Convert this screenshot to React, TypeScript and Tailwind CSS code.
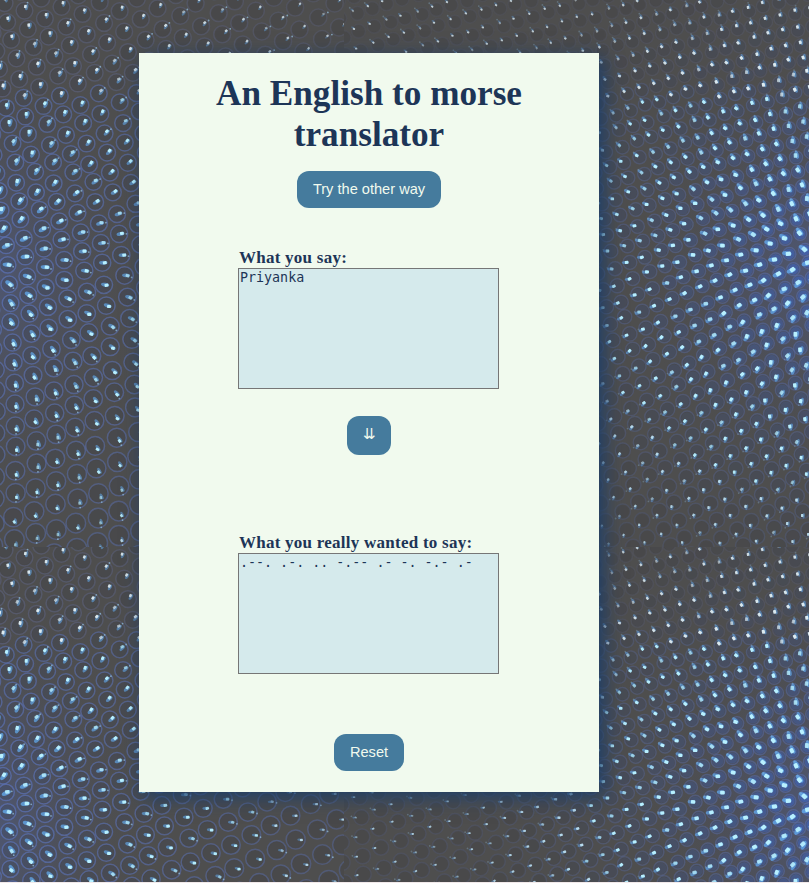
import React from "react";

type Drop = { x: number; y: number; r: number; angle: number; glow: number; jitter: number };

const TILE_H = 547;
const SEAM_X = 344;

function noise(i: number, j: number) {
  const s = Math.sin(i * 127.1 + j * 311.7) * 43758.5453;
  return s - Math.floor(s);
}

function field(
  sx: number,
  sy: number,
  a: [number, number],
  b: [number, number],
  kUp: number,
  kDown: number,
  minX: number,
  maxX: number,
  reach: number,
  radius: number,
  bend: number,
): Drop[] {
  const drops: Drop[] = [];
  for (let i = -50; i <= 50; i++) {
    for (let j = -50; j <= 50; j++) {
      const lx = i * a[0] + j * b[0];
      const ly = i * a[1] + j * b[1];
      const d = Math.hypot(lx, ly);
      const turn = (ly / 260) * bend;
      const ux = lx * Math.cos(turn) - ly * Math.sin(turn) * 0.4;
      const uy = lx * Math.sin(turn) + ly * Math.cos(turn * 0.4);
      const t = 1 / (1 + Math.exp(-uy / 60));
      const k = kUp * (1 - t) + kDown * t;
      const n = noise(i, j);
      const x = sx + ux * (1 + k * d) + (n - 0.5) * 2.4;
      const y = sy + uy * (1 + k * d) + (noise(j, i) - 0.5) * 2.4;
      if (x < minX - 10 || x > maxX + 10 || y < -10 || y > TILE_H + 10) continue;
      const dist = Math.hypot(x - sx, y - sy);
      drops.push({
        x,
        y,
        r: radius * (1 + 1.6 * k * d),
        angle: Math.atan2(y - sy, x - sx),
        glow: Math.max(0, 1 - dist / reach),
        jitter: n,
      });
    }
  }
  return drops;
}

const leftDrops = field(-30, 262, [17.5, -7.5], [1.5, 17.8], 0.0001, 0.0006, 0, SEAM_X, 420, 8, 0.2);
const rightDrops = field(822, 258, [13.8, -5], [4, 14], 0.0001, 0.0005, SEAM_X, 809, 340, 6.3, -0.12);

function Drops({ items, left }: { items: Drop[]; left: boolean }) {
  return (
    <>
      {items.map((d, i) => {
        const off = d.r * (0.1 + 0.65 * (1 - d.glow));
        const hx = d.x + Math.cos(d.angle) * off;
        const hy = d.y + Math.sin(d.angle) * off;
        const upper = Math.max(0, Math.min(1, (150 - d.y) / 100));
        const ring = upper > 0.6 ? "#5f6687" : "#5c74bb";
        const deg = (d.angle * 180) / Math.PI;
        const strength = (left ? 0.75 : 0.78) + d.glow * 0.5 - (d.jitter > 0.72 ? 0.3 : 0);
        const core = left ? 1.2 + d.glow * 1.1 : 1.15 + d.glow * 1.6;
        return (
          <g key={i}>
            <circle
              cx={d.x}
              cy={d.y}
              r={d.r}
              fill="#424346"
              fillOpacity={0.35}
              stroke={ring}
              strokeWidth={1.5}
              strokeOpacity={(left ? 0.32 : 0.15) + d.glow * 0.4}
            />
            <circle cx={d.x} cy={d.y} r={d.r * 0.85} fill="#4269c6" fillOpacity={d.glow * d.glow * (left ? 0.15 : 0.75)} />
            <ellipse
              cx={hx - Math.cos(d.angle) * 1.5}
              cy={hy - Math.sin(d.angle) * 1.5}
              rx={2 + d.glow * 3.2}
              ry={0.9 + d.glow * 1.5}
              fill="#62a8ea"
              fillOpacity={0.35 + d.glow * 0.5}
              transform={`rotate(${deg} ${hx} ${hy})`}
            />
            <rect
              x={hx - core}
              y={hy - core * 0.8}
              width={core * 2}
              height={core * 1.6}
              rx={core * 0.4}
              fill={upper > 0.5 ? "#dceaf0" : d.glow > 0.3 ? "#b8f0ff" : "#bfe3f4"}
              fillOpacity={Math.max(0, Math.min(1, strength))}
              transform={`rotate(${deg + (d.jitter - 0.5) * 50} ${hx} ${hy})`}
            />
            {d.jitter > 0.4 && (
              <circle
                cx={hx + Math.cos(d.angle + 0.3) * 4.5}
                cy={hy + Math.sin(d.angle + 0.3) * 4.5}
                r={0.9}
                fill="#96c4e4"
                fillOpacity={left ? 0.7 : 0.3}
              />
            )}
          </g>
        );
      })}
    </>
  );
}

function Backdrop() {
  return (
    <svg className="absolute inset-0 h-[882px] w-[809px]" viewBox="0 0 809 882" aria-hidden="true">
      <defs>
        <clipPath id="left-clip">
          <rect x="0" y="0" width={SEAM_X} height={TILE_H} />
        </clipPath>
        <clipPath id="right-clip">
          <rect x={SEAM_X} y="0" width={809 - SEAM_X} height={TILE_H} />
        </clipPath>
        <radialGradient id="halo">
          <stop offset="0" stopColor="#5068b5" stopOpacity="0.4" />
          <stop offset="0.5" stopColor="#4b5478" stopOpacity="0.25" />
          <stop offset="1" stopColor="#4b4b4b" stopOpacity="0" />
        </radialGradient>
        <g id="tile">
          <rect width="809" height={TILE_H} fill="#4e4e4e" />
          <g clipPath="url(#left-clip)">
            <ellipse cx="-20" cy="275" rx="180" ry="240" fill="url(#halo)" />
            <Drops items={leftDrops} left />
          </g>
          <g clipPath="url(#right-clip)">
            <ellipse cx="822" cy="265" rx="190" ry="210" fill="url(#halo)" />
            <Drops items={rightDrops} left={false} />
          </g>
        </g>
      </defs>
      <use href="#tile" />
      <use href="#tile" y={TILE_H} />
    </svg>
  );
}

const buttonClass =
  "flex items-center justify-center rounded-[12px] bg-[#457b9d] font-['Liberation_Sans',Arial,sans-serif] text-[14.6px] leading-[17px] text-[#f1faee]";
const labelClass = "block h-[21px] pt-px pl-px text-[17px] leading-[20px] font-bold tracking-[0.25px] whitespace-nowrap";
const areaClass =
  "block h-[121px] w-[261px] resize-none border border-[#767676] bg-[#d5eaec] px-px py-px font-['DejaVu_Sans_Mono',monospace] text-[13.333px] leading-[16px] outline-none";

export default function App() {
  return (
    <div className="relative h-[883px] w-[809px] overflow-hidden bg-[#f1e9ea]">
      <Backdrop />
      <main className="relative mt-[53px] ml-[139px] flex h-[739px] w-[460px] flex-col items-center bg-[#f1faee] pt-5 font-['Liberation_Serif','Times_New_Roman',serif] text-[#1d3557] shadow-[5px_5px_18px_#1d3e69]">
        <h1 className="w-[340px] text-center text-[35.2px] leading-[41px] font-bold">
          An English to morse translator
        </h1>
        <button className={`${buttonClass} mt-4 h-[37px] w-[144px]`}>Try the other way</button>
        <section className="mt-[39px] mr-px w-[261px]">
          <label className={labelClass} htmlFor="source">What you say:</label>
          <textarea id="source" className={areaClass} defaultValue="Priyanka" spellCheck={false} />
        </section>
        <button className={`${buttonClass} mt-[27px] h-[39px] w-[44px] pb-[2px]`}>⇊</button>
        <section className="mt-[77px] mr-px w-[261px]">
          <label className={labelClass} htmlFor="result">What you really wanted to say:</label>
          <textarea id="result" className={areaClass} defaultValue=".--. .-. .. -.-- .- -. -.- .-" spellCheck={false} />
        </section>
        <button className={`${buttonClass} mt-[60px] h-[37px] w-[70px]`}>Reset</button>
      </main>
    </div>
  );
}
